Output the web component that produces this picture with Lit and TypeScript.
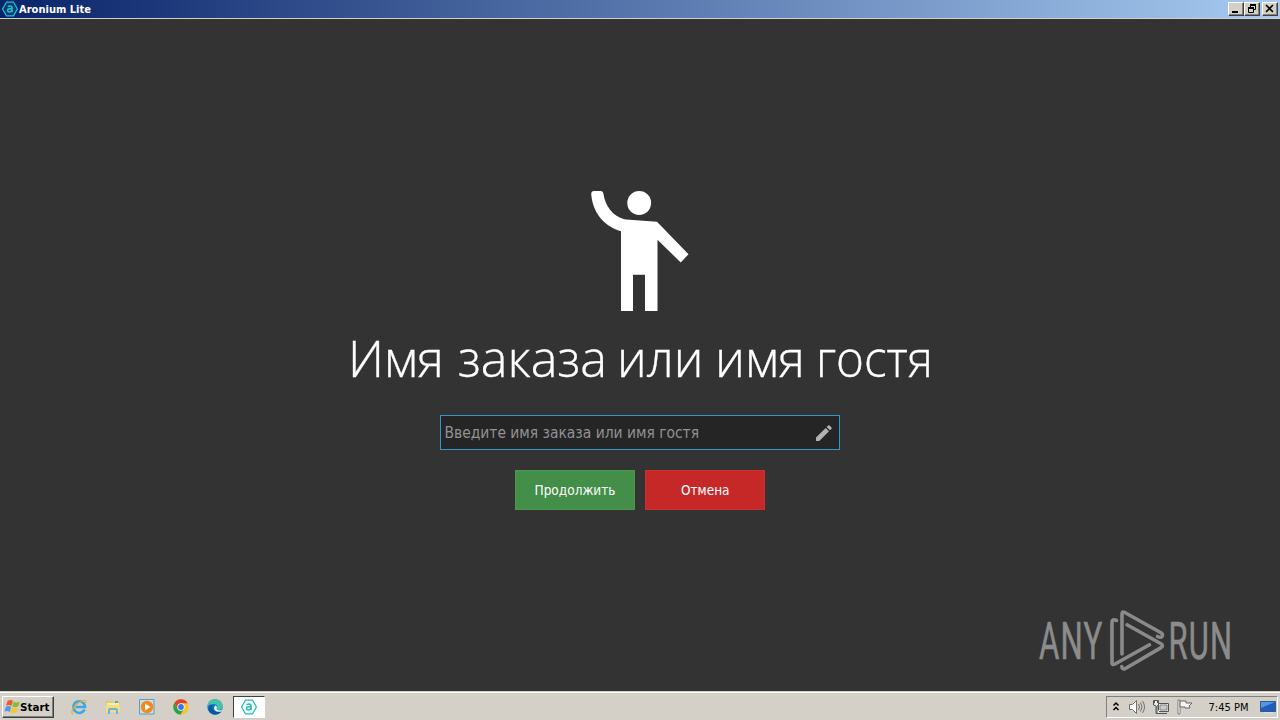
import { LitElement, html, css, svg } from "lit";
import { customElement } from "lit/decorators.js";

const logo = (bg: string, fg: string, size: number) => html`<svg width=${size} height=${size} viewBox="0 0 16 16">
  <path d="M4.4 1.2h7.2L15.4 8l-3.8 6.8H4.4L.6 8z" fill=${bg} stroke=${fg} stroke-width="1.3" stroke-linejoin="round"/>
  <path d="M5.8 5.900q.7-.9 2.100-.9 2.200 0 2.200 1.800v4.400M10 7.700H7.800q-2.200 0-2.200 1.600t1.900 1.600 2.500-1.500" fill="none" stroke=${fg} stroke-width="1.500"/>
</svg>`;

@customElement("title-bar")
class TitleBar extends LitElement {
  static styles = css`
    :host { display: flex; align-items: center; height: 18px; padding: 0 2px 0 2px; gap: 1px; border-bottom: 1px solid #d4d0c8;
      background: linear-gradient(90deg, #0a246a, #a6caf0); box-sizing: content-box; }
    svg { display: block; }
    .name { flex: 1; color: #fff; font: bold 11px/18px "DejaVu Sans", sans-serif; }
    .name svg { overflow: visible; }
    .buttons { display: flex; }
    .btn { width: 16px; height: 14px; box-sizing: border-box; background: #d4d0c8; border: 1px solid; border-color: #fff #404040 #404040 #fff;
      box-shadow: inset -1px -1px #808080; }
    .close { margin-left: 2px; }
  `;
  render() {
    return html`${logo("#073b68", "#20bfe0", 16)}
      <div class="name"><svg width="74" height="18"><text x="0" y="13" textLength="72" lengthAdjust="spacingAndGlyphs" fill="#fff">Aronium Lite</text></svg></div>
      <div class="buttons">
        <div class="btn"><svg width="14" height="12"><path d="M3 8h6v2H3z"/></svg></div>
        <div class="btn"><svg width="14" height="12" fill="none" stroke="#000"><path d="M5 1.5h6M5.5 1v3M10.5 1v5.5H9M3 4.5h5M3.5 4v5.5h5V4M5 2.5h6M3 5.5h5"/></svg></div>
        <div class="btn close"><svg width="14" height="12"><path d="M3 2l7 7M10 2L3 9" stroke="#000" stroke-width="1.6"/></svg></div>
      </div>`;
  }
}

@customElement("guest-form")
class GuestForm extends LitElement {
  static styles = css`
    :host { display: flex; flex-direction: column; align-items: center; padding-top: 167px; font-family: "DejaVu Sans", sans-serif; }
    svg { display: block; overflow: visible; }
    .title { margin-top: 16px; font-family: "Open Sans", sans-serif; font-weight: 300; font-size: 50px; }
    .field { display: flex; align-items: center; justify-content: space-between; box-sizing: border-box; width: 400px; height: 35px;
      margin-top: 13px; padding: 0 7px 0 4px; border: 1px solid #3199c8; background: #252525; }
    .hint { font-size: 16px; }
    .actions { display: flex; gap: 10px; margin-top: 20px; }
    .action { display: flex; justify-content: center; box-sizing: border-box; width: 120px; height: 40px; font-size: 13.5px; }
    .ok { background: #438e48; border: 1px solid #4a9850; }
    .cancel { background: #c62828; border: 1px solid #cc2f2f; }
  `;
  render() {
    const word = (t: string, x: number, w: number) =>
      svg`<tspan x=${x} textLength=${w} lengthAdjust="spacingAndGlyphs">${t}</tspan>`;
    return html`
      <svg width="100" height="126" viewBox="590 186 100 126" fill="#fff">
        <circle cx="639.2" cy="203" r="11.9"/>
        <path d="M594 191h7q2 0 2.4 2.5C605 206 613 216 623.5 219q2 .6 6 .7l27.500 2 31.500 32.600-7.800 8.200-23.200-22.800V311H645v-36.300h-12V311h-12v-79.700C604 226 593 213 591.300 195q-.5-4 2.700-4z"/>
      </svg>
      <svg class="title" width="580" height="74"><text y="49" fill="#fff" stroke="#fff" stroke-width=".35">${word("Имя", -2, 96)} ${word("заказа", 108, 149)} ${word("или", 267, 86.5)} ${word("имя", 365, 90)} ${word("гостя", 466, 117)}</text></svg>
      <div class="field">
        <svg class="hint" width="254" height="24"><text x="-.5" y="17" textLength="254.500" lengthAdjust="spacingAndGlyphs" fill="#929292">Введите имя заказа или имя гостя</text></svg>
        <svg width="16" height="16"><path d="M0 12.600L9.700 2.900l3.300 3.300L3.300 16H0zM10.600 2L12.200.5q.7-.6 1.400 0l1.900 1.900q.6.7 0 1.400L13.900 5.300z" fill="#b2b2b2"/></svg>
      </div>
      <div class="actions">
        <div class="action ok"><svg width="80" height="38"><text x="-.5" y="24" textLength="81" lengthAdjust="spacingAndGlyphs" fill="#fff">Продолжить</text></svg></div>
        <div class="action cancel"><svg width="48" height="38"><text x="0" y="24" textLength="48.500" lengthAdjust="spacingAndGlyphs" fill="#fff">Отмена</text></svg></div>
      </div>`;
  }
}

@customElement("any-run-mark")
class AnyRunMark extends LitElement {
  static styles = css`
    :host { display: block; }
    svg { display: block; overflow: visible; font-family: Roboto, sans-serif; font-size: 52px; }
  `;
  render() {
    const word = (t: string, x: number, scale: number) =>
      svg`<text transform="translate(${x} 59) scale(${scale} 1)" letter-spacing="2" fill="#8c8c8c" stroke="#8c8c8c" stroke-width=".6">${t}</text>`;
    return html`<svg width="210" height="80">
      ${word("ANY", 9, 0.6)}${word("RUN", 138.5, 0.595)}
      <g fill="none" stroke="#8a8a8a" stroke-width="3.6" stroke-linejoin="round" stroke-linecap="round">
        <path d="M92 54V14q0-3 2.800-1.500L131 32.800q2.500 1.700 1 3.700-1.500 1.500-4.500 0"/>
        <path d="M97 24.800L131 43.800q3 2 0 3.800L95 68.800q-3 .7-3.200-2.300"/>
        <path d="M86.500 20.500q-4.500-2-4.500 2v40.500q0 2.500 3 1L119.500 44.800"/>
      </g>
    </svg>`;
  }
}

@customElement("task-bar")
class TaskBar extends LitElement {
  static styles = css`
    :host { display: flex; align-items: flex-start; box-sizing: border-box; height: 28px; border-top: 1px solid #fff; background: #d4d0c8;
      padding: 3px 2px 0 2px; box-shadow: 0 -1px #d4d0c8; }
    svg { display: block; flex: none; }
    .start { display: flex; box-sizing: border-box; width: 52px; height: 22px; background: #d4d0c8; border: 1px solid; border-color: #fff #404040 #404040 #fff;
      box-shadow: inset -1px -1px #808080; padding: 2px 0 0 1px; font: bold 11px "DejaVu Sans", sans-serif; }
    .quick { display: flex; align-items: center; gap: 18px; height: 22px; margin-left: 17px; flex: 1; }
    .active { display: flex; align-items: center; justify-content: center; box-sizing: border-box; width: 32px; height: 22px; margin-left: -8px;
      background: #fff; border: 1px solid; border-color: #404040 #fff #fff #404040; }
    .tray { display: flex; align-items: center; box-sizing: border-box; height: 22px; width: 172px; border: 1px solid; border-color: #808080 #fff #fff #808080;
      padding-left: 5px; }
    .speaker { margin-left: 9px; }
    .net { margin-left: 7px; }
    .flag { margin-left: 8px; }
    .time { margin-left: 14px; font-family: "DejaVu Sans", sans-serif; font-size: 11px; overflow: visible; }
    .desk { margin-left: 9px; }
  `;
  render() {
    return html`
      <div class="start"><svg width="48" height="17">
        <path d="M3.500 2q3-2 5.500 0L7.500 7q-2.500-2-5.500-.300z" fill="#ee5c2d"/><path d="M9.800 2.500q2.500 1.700 6 .2L14.200 7.500q-3 1.500-5.800 0z" fill="#85bd37"/>
        <path d="M1.800 8q2.900-1.800 5.400 0l-1.400 5Q3.300 11.200.3 12.800z" fill="#4e9ae6"/><path d="M8.100 8.500q3 1.500 5.800 0l-1.500 5q-3 1.500-5.800 0z" fill="#f7c52f"/>
        <text x="16" y="12" textLength="29.500" lengthAdjust="spacingAndGlyphs">Start</text></svg></div>
      <div class="quick">
        <svg width="16" height="16"><path d="M13.500 10.500A5.800 5.800 0 1 1 14 8H4.500" fill="none" stroke="#3ba8e4" stroke-width="2.600"/><path d="M2 15c-4-1 2-10 9-13 4-1.700 4.500 0 3.500 2" fill="none" stroke="#e5b336" stroke-width="1.300"/></svg>
        <svg width="16" height="16"><path d="M1 2h5l1 1h8v10H1z" fill="#e8c962"/><path d="M2 4h12v3H2z" fill="#f9edac"/><path d="M1 6h14v7H1z" fill="#f4dc83"/><path d="M3 15v-4q0-2 2-2h6q2 0 2 2v4h-2v-4H5v4z" fill="#68b7d9"/><path d="M10 2h3v2h-3z" fill="#51a6b9"/></svg>
        <svg width="16" height="16"><path d="M.5.500h14.500v14.500H.5z" fill="#c9dfed" stroke="#5b9dc8"/><circle cx="8" cy="8" r="6.200" fill="#f28a16"/><path d="M6 4.500l5.500 3.500L6 11.500z" fill="#fff"/></svg>
        <svg width="16" height="16"><circle cx="8" cy="8" r="7.700" fill="#fac52b"/><path d="M1.300 4.100A7.700 7.700 0 0 1 14.700 4.200L8 4.300 4.700 10z" fill="#e43e2f"/><path d="M1.300 4.100A7.700 7.700 0 0 0 7.300 15.700L11 10H4.700z" fill="#2ba24c"/><circle cx="8" cy="8" r="3.700" fill="#fff"/><circle cx="8" cy="8" r="2.900" fill="#3978e7"/></svg>
        <svg width="16" height="16"><circle cx="8" cy="8" r="7.700" fill="#1676c5"/><path d="M.5 7C1 2 4 .3 8 .3c5 0 8 3.700 7.700 7.200-.4 4-5 4-6.300 2.600 1.800-2 .5-5-2.400-5C4 5 2 6 .5 7z" fill="#43c5a5"/><path d="M6 6c-2 4 1 8 8.500 6.500-3 4-8.500 4-11.500.5S2 6 6 6z" fill="#0b559f"/><path d="M8 6.500q3 1 1.400 3.600 2 2.500 6 .4l-1.500 2Q7.500 13.500 7 9z" fill="#e8f7fa"/></svg>
        <div class="active">${logo("#fff", "#20bdbd", 16)}</div>
      </div>
      <div class="tray">
        <svg width="8" height="14"><path d="M1.500 5.500L4 3l2.500 2.500M1.500 10L4 7.500 6.500 10" fill="none" stroke="#000" stroke-width="1.500"/></svg>
        <svg class="speaker" width="17" height="16" fill="none" stroke="#707070"><path d="M.5 5.500h3l4-4v13l-4-4h-3z" fill="#fff"/><path d="M9.500 5q2 3 0 6M11.500 3.500q3 4.500 0 9M13.500 2q4 6 0 12"/></svg>
        <svg class="net" width="16" height="16" fill="#eee" stroke="#555"><path d="M5.500 4.500h10v8h-10zM7 14.500h7"/><path d="M7 6h7v5H7z" fill="#ccc" stroke="#888"/><path d="M.5 1.500h5V6L4 7v7.500h3M1.500 1v3M4.500 1v3M.5 1.500V6L3 7v7.500h1"/></svg>
        <svg class="flag" width="16" height="16"><path d="M1 1h2v14H1z" fill="#fff" stroke="#666" stroke-width=".8"/><path d="M3 2h6v2h6l-3 3 1 2H8V8H3z" fill="#f4f4f4" stroke="#666"/></svg>
        <svg class="time" width="44" height="18"><text x="1.500" y="13" textLength="40" lengthAdjust="spacingAndGlyphs">7:45 PM</text></svg>
        <svg class="desk" width="16" height="16"><path d="M.5 2.500h15v10H.5z" fill="#205fbd" stroke="#315b8b"/><path d="M1 3h14L1 9z" fill="#5399df"/><path d="M4 13h9v1.500H4z" fill="#ddd"/></svg>
      </div>`;
  }
}

@customElement("app-root")
class AppRoot extends LitElement {
  static styles = css`
    :host { display: flex; flex-direction: column; width: 1280px; height: 720px; overflow: hidden; background: #333; }
    .main { position: relative; flex: 1; }
    .mark { position: absolute; right: 40px; bottom: 12px; }
  `;
  render() {
    return html`<title-bar></title-bar>
      <div class="main"><guest-form></guest-form><any-run-mark class="mark"></any-run-mark></div>
      <task-bar></task-bar>`;
  }
}
